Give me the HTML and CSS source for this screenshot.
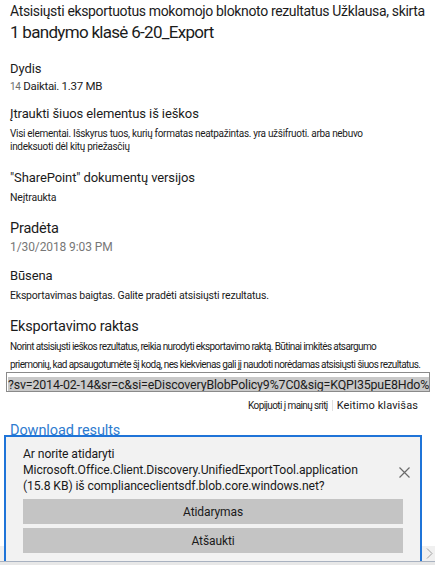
FILE: index.html
```html
<!DOCTYPE html>
<html lang="lt">
<head>
<meta charset="utf-8">
<title>Eksportavimas</title>
<link rel="stylesheet" href="styles.css">
</head>
<body>
<main class="panel">
  <header class="head">
    <div class="head-line1">Atsisiųsti eksportuotus mokomojo bloknoto rezultatus Užklausa, skirta</div>
    <div class="head-line2">1 bandymo klasė 6-20_Export</div>
  </header>

  <section class="field f-size">
    <div class="label">Dydis</div>
    <div class="value"><span class="count">14</span> Daiktai. 1.37 MB</div>
  </section>

  <section class="field f-include">
    <div class="label">Įtraukti šiuos elementus iš ieškos</div>
    <div class="small">Visi elementai. Išskyrus tuos, kurių formatas neatpažintas. yra užšifruoti. arba nebuvo<br>indeksuoti dėl kitų priežasčių</div>
  </section>

  <section class="field f-sp">
    <div class="label">"SharePoint" dokumentų versijos</div>
    <div class="value-sm">Neįtraukta</div>
  </section>

  <section class="field f-start">
    <div class="label-lg">Pradėta</div>
    <div class="date">1/30/2018 9:03 PM</div>
  </section>

  <section class="field f-status">
    <div class="label">Būsena</div>
    <div class="value-sm">Eksportavimas baigtas. Galite pradėti atsisiųsti rezultatus.</div>
  </section>

  <section class="field f-key">
    <div class="label-lg">Eksportavimo raktas</div>
    <p class="note">Norint atsisiųsti ieškos rezultatus, reikia nurodyti eksportavimo raktą. Būtinai imkitės atsargumo<br>priemonių, kad apsaugotumėte šį kodą, nes kiekvienas gali jį naudoti norėdamas atsisiųsti šiuos rezultatus.</p>
    <div class="keybox"><span class="keytext">?sv=2014-02-14&amp;sr=c&amp;si=eDiscoveryBlobPolicy9%7C0&amp;sig=KQPI35puE8Hdo%2BG3c</span></div>
    <div class="key-actions">
      <span class="copy">Kopijuoti į mainų sritį</span>
      <span class="sep"></span>
      <span class="regen">Keitimo klavišas</span>
    </div>
  </section>

  <a class="download">Download results</a>
</main>

<div class="prompt">
  <div class="prompt-row">
    <p class="prompt-text">Ar norite atidaryti<br>Microsoft.Office.Client.Discovery.UnifiedExportTool.application<br>(15.8 KB) iš complianceclientsdf.blob.core.windows.net?</p>
    <svg class="close" width="11" height="11" viewBox="0 0 11 11" aria-hidden="true">
      <path d="M0.5 0.5 L10.5 10.5 M10.5 0.5 L0.5 10.5" stroke="#6b6b6b" stroke-width="1.2" fill="none"/>
    </svg>
  </div>
  <div class="prompt-btn">Atidarymas</div>
  <div class="prompt-btn">Atšaukti</div>
</div>

<div class="hscroll">
  <span class="hscroll-arrow">
    <svg width="7" height="11" viewBox="0 0 7 11" aria-hidden="true"><path d="M1 0.5 L6 5.5 L1 10.5" stroke="#a0a0a0" stroke-width="1" fill="none"/></svg>
  </span>
</div>
<div class="statusbar"></div>
</body>
</html>
```
FILE: styles.css
```css
html, body {
  margin: 0;
  padding: 0;
  background: #ffffff;
  width: 435px;
  height: 565px;
  overflow: hidden;
}

body {
  font-family: Roboto, "Liberation Sans", sans-serif;
  color: #1b1b1b;
  position: relative;
}

.panel {
  padding: 2px 0 0 10px;
}

.head-line1 {
  font-size: 14px;
  line-height: 19px;
  letter-spacing: -0.35px;
  white-space: nowrap;
}

.head-line2 {
  font-size: 17px;
  line-height: 22px;
  letter-spacing: -0.7px;
}

.field {
  display: flex;
  flex-direction: column;
}

.label {
  font-size: 13px;
  line-height: 18px;
  letter-spacing: -0.1px;
}

.label-lg {
  font-size: 14.5px;
  line-height: 20px;
  letter-spacing: -0.2px;
}

.value {
  font-size: 11.5px;
  line-height: 16px;
  letter-spacing: -0.3px;
}

.count {
  color: #6b6b6b;
  font-size: 10px;
}

.small {
  font-size: 10px;
  line-height: 13px;
  letter-spacing: -0.3px;
  white-space: nowrap;
  margin-top: 4px;
}

.value-sm {
  font-size: 10.5px;
  line-height: 14px;
  letter-spacing: -0.2px;
  margin-top: 4px;
}

.date {
  font-size: 12px;
  line-height: 16px;
  color: #777777;
  letter-spacing: -0.1px;
}

.f-size { margin-top: 17px; }
.f-include { margin-top: 10px; }
.f-sp { margin-top: 16px; }
.f-start { margin-top: 14px; }
.f-status { margin-top: 12px; }
.f-key { margin-top: 14px; }

.note {
  margin: 1px 0 0;
  font-size: 10px;
  line-height: 18px;
  letter-spacing: -0.6px;
  white-space: nowrap;
}

.keybox {
  margin: -2px 5px 0 -4px;
  height: 17px;
  border: 1px solid #8a8a8a;
  background: #ffffff;
  padding: 1px 0 0 1px;
  overflow: hidden;
  white-space: nowrap;
}

.keytext {
  display: inline-block;
  background: #c9c9c9;
  font-size: 12.4px;
  line-height: 16px;
  letter-spacing: -0.15px;
  padding-right: 2px;
}

.key-actions {
  display: flex;
  justify-content: flex-end;
  align-items: center;
  gap: 4px;
  margin: 7px 17px 0 0;
}

.copy {
  font-size: 10px;
  letter-spacing: -0.6px;
}

.regen {
  font-size: 11px;
  letter-spacing: 0.1px;
}

.sep {
  width: 1px;
  height: 11px;
  background: #e0e0e0;
}

.download {
  display: block;
  margin-top: 9px;
  font-size: 14.5px;
  line-height: 20px;
  color: #2e7bcf;
  letter-spacing: -0.1px;
}

/* download confirmation bar floating above the page */
.prompt {
  position: absolute;
  z-index: 2;
  left: 4px;
  top: 435px;
  width: 418px;
  height: 126px;
  box-sizing: border-box;
  background: #f2f2f2;
  border: 2px solid #1f74d8;
  border-bottom: none;
  padding: 0 17px;
  display: flex;
  flex-direction: column;
  gap: 4px;
}

.prompt-row {
  display: flex;
  align-items: center;
  justify-content: space-between;
  padding: 9px 0 1px 0;
}

.prompt-text {
  margin: 0;
  font-size: 12.2px;
  line-height: 16px;
  letter-spacing: -0.1px;
  color: #1a1a1a;
}

.close {
  margin: 4px -7px 0 0;
}

.prompt-btn {
  height: 25px;
  background: #c4c4c4;
  display: flex;
  align-items: center;
  justify-content: center;
  font-size: 12px;
  letter-spacing: -0.1px;
  color: #1a1a1a;
}

.hscroll {
  position: absolute;
  z-index: 1;
  left: 0;
  right: 0;
  top: 546px;
  height: 15px;
  background: #f0f0f0;
  display: flex;
  justify-content: flex-end;
  align-items: center;
}

.hscroll-arrow {
  display: flex;
  width: 12px;
  justify-content: center;
}

.statusbar {
  position: absolute;
  z-index: 3;
  left: 0;
  right: 0;
  top: 561px;
  height: 4px;
  background: #e8e8e8;
  border-top: 1px solid #a9b2c0;
}
```
